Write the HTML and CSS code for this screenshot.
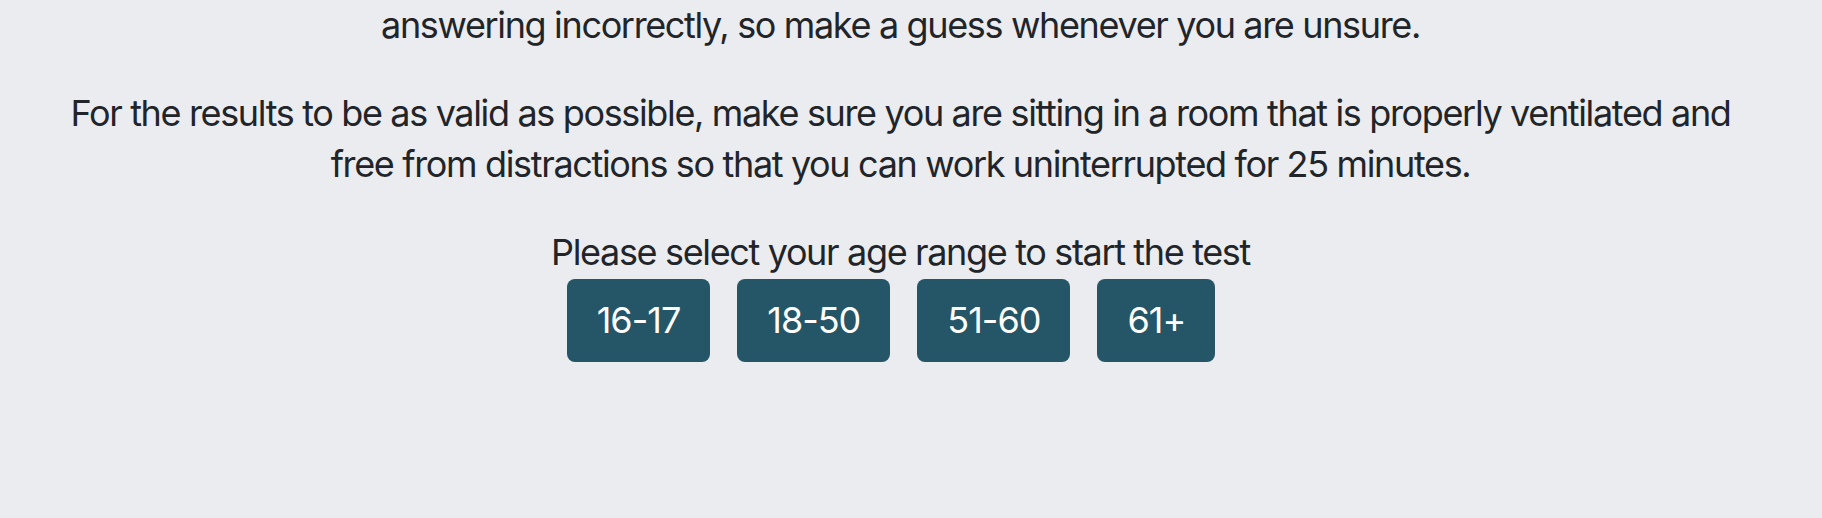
FILE: index.html
```html
<!DOCTYPE html>
<html lang="en">
<head>
<meta charset="utf-8">
<title>Test introduction</title>
<link rel="stylesheet" href="styles.css">
</head>
<body>
<main class="intro">
  <p class="intro-text">answering incorrectly, so make a guess whenever you are unsure.</p>
  <p class="intro-text">For the results to be as valid as possible, make sure you are sitting in a room that is properly ventilated and free from distractions so that you can work uninterrupted for 25 minutes.</p>
  <section class="age-select">
    <h2 class="age-title">Please select your age range to start the test</h2>
    <div class="age-buttons">
      <button class="age-btn" type="button">16-17</button>
      <button class="age-btn" type="button">18-50</button>
      <button class="age-btn" type="button">51-60</button>
      <button class="age-btn" type="button">61+</button>
    </div>
  </section>
</main>
</body>
</html>
```

FILE: styles.css
```css
html, body {
  margin: 0;
  padding: 0;
  background: #ebecf0;
}
body {
  font-family: Inter, "Noto Sans", "Liberation Sans", sans-serif;
  color: #212529;
  height: 518px;
  overflow: hidden;
  padding-right: 21px;
}
.intro {
  width: 1700px;
  margin: 0 auto;
  text-align: center;
  font-size: 36px;
  line-height: 51px;
  letter-spacing: -1.35px;
}
.intro-text {
  margin: 0 0 37px 0;
}
.age-select {
  display: flex;
  flex-direction: column;
  align-items: center;
}
.age-title {
  margin: 0;
  font-size: 36px;
  font-weight: 400;
  line-height: 51px;
}
.age-buttons {
  display: flex;
  gap: 27px;
  margin-top: 1px;
  padding-right: 19px;
}
.age-btn {
  font-family: inherit;
  font-size: 36px;
  line-height: 51px;
  letter-spacing: -1px;
  color: #ffffff;
  background: #245667;
  border: none;
  border-radius: 8px;
  padding: 16px 30px;
  cursor: pointer;
}
```
